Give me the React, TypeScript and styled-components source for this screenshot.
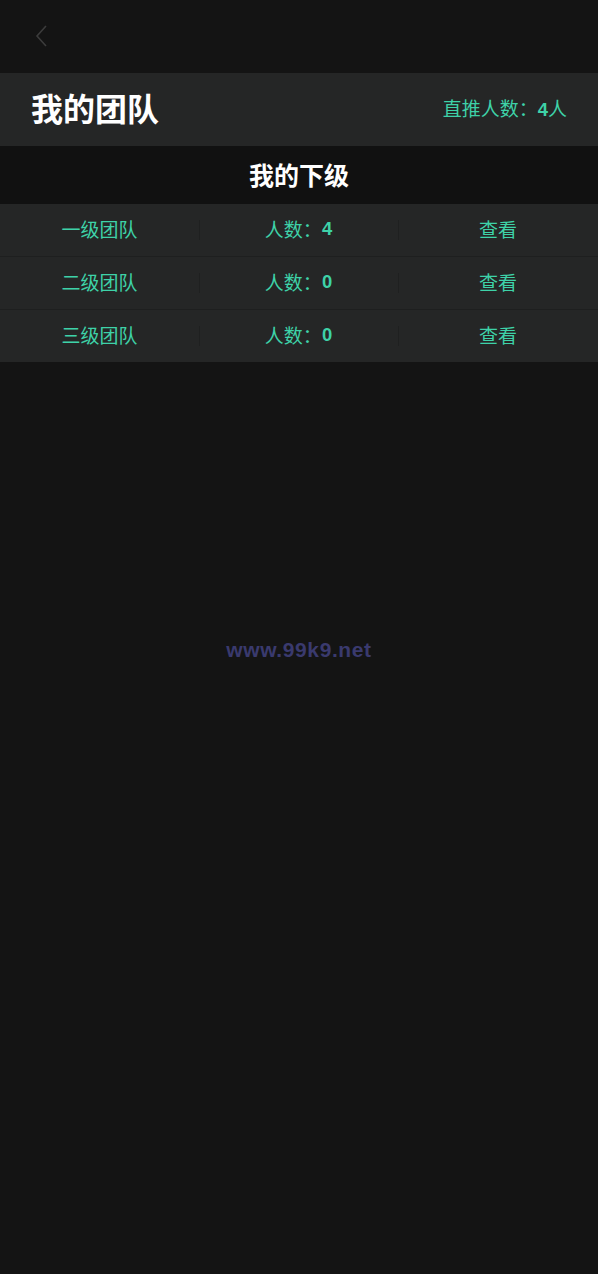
import React from 'react';
import styled, { createGlobalStyle } from 'styled-components';

const GlobalStyle = createGlobalStyle`
  html, body {
    margin: 0;
    padding: 0;
    background: #141414;
    font-family: "Liberation Sans", "Noto Sans CJK SC", sans-serif;
  }
`;

const Page = styled.div`
  min-height: 1274px;
  display: flex;
  flex-direction: column;
  background: #141414;
`;

const NavBar = styled.div`
  height: 73px;
  display: flex;
  align-items: center;
  padding-left: 34px;
`;

const BackButton = styled.button`
  background: none;
  border: none;
  padding: 0 0 2px;
  display: flex;
  cursor: pointer;
`;

const Header = styled.div`
  height: 73px;
  box-sizing: border-box;
  display: flex;
  align-items: center;
  justify-content: space-between;
  padding: 0 31px 5px;
  background: #252626;
`;

const Title = styled.h1`
  margin: 0;
  font-size: 32px;
  font-weight: bold;
  color: #fff;
`;

const DirectCount = styled.div`
  font-size: 19px;
  color: #3ed2a8;
`;

const Num = styled.span`
  font-weight: bold;
  font-size: 0.97em;
`;

const SubTitle = styled.div`
  height: 58px;
  box-sizing: border-box;
  padding-bottom: 3px;
  display: flex;
  align-items: center;
  justify-content: center;
  background: #111;
  color: #fff;
  font-size: 25px;
  font-weight: bold;
`;

const Table = styled.div`
  background: #252626;
`;

const Row = styled.div`
  height: 52px;
  display: grid;
  grid-template-columns: 199px 199px 1fr;
  border-bottom: 1px solid #1e1f1f;
  &:last-child {
    border-bottom: none;
  }
`;

const Cell = styled.div`
  display: flex;
  align-items: center;
  justify-content: center;
  padding-bottom: 3px;
  font-size: 19px;
  color: #3ed2a8;
  position: relative;
  & + &::before {
    content: '';
    position: absolute;
    left: 0;
    top: 16px;
    bottom: 16px;
    width: 1px;
    background: #1f2020;
  }
`;

const Filler = styled.div`
  flex: 1;
  display: flex;
  justify-content: center;
  padding-top: 276px;
`;

const Watermark = styled.div`
  font-size: 21px;
  font-weight: bold;
  color: #3a3a6e;
  letter-spacing: 0.6px;
`;

const teams = [
  { name: '一级团队', count: 4 },
  { name: '二级团队', count: 0 },
  { name: '三级团队', count: 0 },
];

const App: React.FC = () => {
  return (
    <Page>
      <GlobalStyle />
      <NavBar>
        <BackButton>
          <svg width="14" height="24" viewBox="0 0 14 24" fill="none">
            <path d="M12 2L3 12l9 10" stroke="#3c3c3c" strokeWidth="1.6" />
          </svg>
        </BackButton>
      </NavBar>
      <Header>
        <Title>我的团队</Title>
        <DirectCount>
          直推人数：<Num>4</Num>人
        </DirectCount>
      </Header>
      <SubTitle>我的下级</SubTitle>
      <Table>
        {teams.map((t) => (
          <Row key={t.name}>
            <Cell>{t.name}</Cell>
            <Cell>
              人数：<Num>{t.count}</Num>
            </Cell>
            <Cell>查看</Cell>
          </Row>
        ))}
      </Table>
      <Filler>
        <Watermark>www.99k9.net</Watermark>
      </Filler>
    </Page>
  );
};

export default App;
